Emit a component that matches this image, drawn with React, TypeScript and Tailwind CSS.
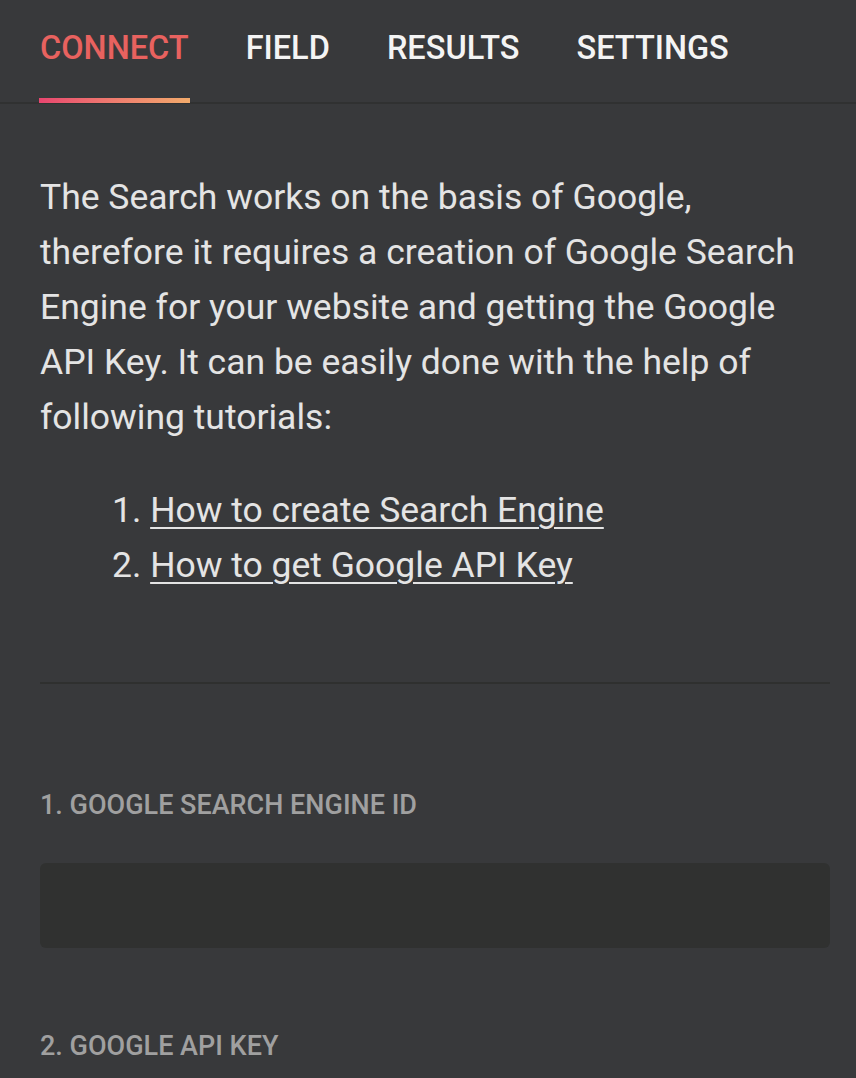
import React, { useState } from 'react';

const tabs = ['Connect', 'Field', 'Results', 'Settings'];

export default function App() {
    const [active, setActive] = useState('Connect');

    return (
        <div className="min-h-[1078px] bg-[#38393b] font-['Roboto',sans-serif] text-[#e4e4e4]">
            {/* tabs */}
            <div className="flex gap-[55px] px-[39px] border-b-2 border-[#303131] h-[104px]">
                {tabs.map((t) => (
                    <button
                        key={t}
                        onClick={() => setActive(t)}
                        className={`relative h-full flex items-start pt-[32px] px-px text-[32.5px] leading-none font-medium uppercase ${active === t ? 'text-[#e8625f]' : 'text-[#f4f4f4]'}`}
                    >
                        {t}
                        {active === t && (
                            <span className="absolute left-0 right-0 bottom-[-1px] h-[5px] bg-gradient-to-r from-[#e8456f] to-[#f2aa6b]" />
                        )}
                    </button>
                ))}
            </div>

            <div className="pl-[40px] pr-[26px]">
                <p className="mt-[66px] text-[35.5px] leading-[55px]">
                    The Search works on the basis of Google, therefore it requires a creation of Google Search Engine for your website and getting the Google API Key. It can be easily done with the help of following tutorials:
                </p>

                <ol className="mt-[38px] pl-[72px] text-[35.5px] leading-[55px] list-decimal list-inside">
                    <li>
                        <a href="#" className="underline underline-offset-[5px] decoration-2">How to create Search Engine</a>
                    </li>
                    <li>
                        <a href="#" className="underline underline-offset-[5px] decoration-2">How to get Google API Key</a>
                    </li>
                </ol>

                <div className="mt-[89px] h-[2px] bg-[#2f302f]" />

                <label className="block mt-[105px] text-[27px] leading-[32px] font-medium uppercase text-[#a0a0a0]">
                    1. Google Search Engine ID
                </label>
                <input className="block w-full mt-[42px] h-[85px] rounded-md bg-[#303130] outline-none" />

                <label className="block mt-[82px] text-[27px] leading-[32px] font-medium uppercase text-[#a0a0a0]">
                    2. Google API Key
                </label>
            </div>
        </div>
    );
}
